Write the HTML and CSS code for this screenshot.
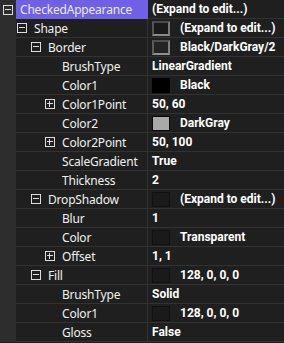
FILE: index.html
```html
<!DOCTYPE html>
<html lang="en">
  <head>
    <meta charset="UTF-8" />
    <meta name="viewport" content="width=device-width, initial-scale=1.0" />
    <title>Property Grid</title>
    <link rel="stylesheet" href="styles.css">
  </head>
  <body>
    <div class="grid">
      <div class="row selected">
        <div class="gutter"><span class="exp minus"></span></div>
        <div class="name lvl0">CheckedAppearance</div>
        <div class="value">(Expand to edit...)</div>
      </div>
      <div class="row">
        <div class="gutter"></div>
        <div class="name lvl1"><span class="exp minus"></span>Shape</div>
        <div class="value"><span class="swatch sw-shape"></span>(Expand to edit...)</div>
      </div>
      <div class="row">
        <div class="gutter"></div>
        <div class="name lvl2"><span class="exp minus"></span>Border</div>
        <div class="value"><span class="swatch sw-border"></span>Black/DarkGray/2</div>
      </div>
      <div class="row">
        <div class="gutter"></div>
        <div class="name lvl3"><span class="exp none"></span>BrushType</div>
        <div class="value">LinearGradient</div>
      </div>
      <div class="row">
        <div class="gutter"></div>
        <div class="name lvl3"><span class="exp none"></span>Color1</div>
        <div class="value"><span class="swatch sw-black"></span>Black</div>
      </div>
      <div class="row">
        <div class="gutter"></div>
        <div class="name lvl3"><span class="exp plus"></span>Color1Point</div>
        <div class="value">50, 60</div>
      </div>
      <div class="row">
        <div class="gutter"></div>
        <div class="name lvl3"><span class="exp none"></span>Color2</div>
        <div class="value"><span class="swatch sw-gray"></span>DarkGray</div>
      </div>
      <div class="row">
        <div class="gutter"></div>
        <div class="name lvl3"><span class="exp plus"></span>Color2Point</div>
        <div class="value">50, 100</div>
      </div>
      <div class="row">
        <div class="gutter"></div>
        <div class="name lvl3"><span class="exp none"></span>ScaleGradient</div>
        <div class="value">True</div>
      </div>
      <div class="row">
        <div class="gutter"></div>
        <div class="name lvl3"><span class="exp none"></span>Thickness</div>
        <div class="value">2</div>
      </div>
      <div class="row">
        <div class="gutter"></div>
        <div class="name lvl2"><span class="exp minus"></span>DropShadow</div>
        <div class="value"><span class="swatch sw-dark"></span>(Expand to edit...)</div>
      </div>
      <div class="row">
        <div class="gutter"></div>
        <div class="name lvl3"><span class="exp none"></span>Blur</div>
        <div class="value">1</div>
      </div>
      <div class="row">
        <div class="gutter"></div>
        <div class="name lvl3"><span class="exp none"></span>Color</div>
        <div class="value"><span class="swatch sw-dark"></span>Transparent</div>
      </div>
      <div class="row">
        <div class="gutter"></div>
        <div class="name lvl3"><span class="exp plus"></span>Offset</div>
        <div class="value">1, 1</div>
      </div>
      <div class="row">
        <div class="gutter"></div>
        <div class="name lvl2"><span class="exp minus"></span>Fill</div>
        <div class="value"><span class="swatch sw-dark"></span>128, 0, 0, 0</div>
      </div>
      <div class="row">
        <div class="gutter"></div>
        <div class="name lvl3"><span class="exp none"></span>BrushType</div>
        <div class="value">Solid</div>
      </div>
      <div class="row">
        <div class="gutter"></div>
        <div class="name lvl3"><span class="exp none"></span>Color1</div>
        <div class="value"><span class="swatch sw-dark"></span>128, 0, 0, 0</div>
      </div>
      <div class="row">
        <div class="gutter"></div>
        <div class="name lvl3"><span class="exp none"></span>Gloss</div>
        <div class="value">False</div>
      </div>
    </div>
  </body>
</html>
```

FILE: styles.css
```css
body {
  margin: 0;
  background-color: #1f1f1f;
  font-family: "Noto Sans", "Open Sans", sans-serif;
  font-size: 12px;
  color: #f0f0f0;
  overflow: hidden;
}

.grid {
  width: 284px;
  height: 343px;
  background-color: #1f1f1f;
}

.row {
  display: grid;
  grid-template-columns: 16px 132px 1fr;
  height: 19px;
}

.gutter {
  background-color: #2d2d2d;
  display: flex;
  align-items: center;
  padding-left: 3px;
}

.name,
.value {
  display: flex;
  align-items: center;
  border-bottom: 1px solid #323232;
  white-space: nowrap;
  overflow: hidden;
}

.name {
  border-right: 1px solid #323232;
  letter-spacing: -0.2px;
}

.value {
  font-family: Roboto, "Noto Sans", sans-serif;
  font-weight: bold;
  color: #ffffff;
  padding-left: 4px;
}

.selected .name {
  background-color: #6f60e4;
  color: #ece8ff;
  border-right-color: #6f60e4;
  border-bottom-color: #6f60e4;
}

.lvl0 { padding-left: 4px; }
.lvl1 { padding-left: 1px; }
.lvl2 { padding-left: 15px; }
.lvl3 { padding-left: 29px; }

.exp {
  box-sizing: border-box;
  width: 10px;
  height: 10px;
  margin-right: 7px;
  flex-shrink: 0;
  position: relative;
}

.gutter .exp {
  margin-right: 0;
}

.minus,
.plus {
  border: 1px solid #dcdcdc;
}

.minus::before,
.plus::before {
  content: "";
  position: absolute;
  left: 1px;
  top: 3px;
  width: 6px;
  height: 2px;
  border-top: 1px solid #dcdcdc;
}

.plus::after {
  content: "";
  position: absolute;
  left: 3px;
  top: 1px;
  width: 1px;
  height: 6px;
  background-color: #dcdcdc;
}

.swatch {
  box-sizing: border-box;
  width: 18px;
  height: 15px;
  margin-right: 10px;
  flex-shrink: 0;
  border: 1px solid #111111;
}

.sw-shape {
  background-color: #1a1a1a;
  border: 2px solid;
  border-color: #4a4a4a #7a7a7a #8a8a8a #555555;
}

.sw-border {
  background-color: #242424;
  border: 2px solid;
  border-color: #505050 #808080 #909090 #5c5c5c;
}

.sw-black {
  background-color: #000000;
  border-color: #000000;
}

.sw-gray {
  background-color: #a9a9a9;
  border-color: #0a0a0a;
}

.sw-dark {
  background-color: #1a1a1a;
  border-color: #111111;
}
```
